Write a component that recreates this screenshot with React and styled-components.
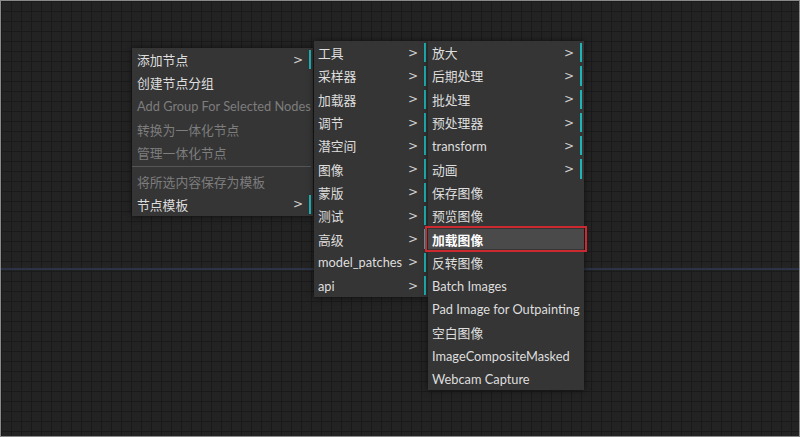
import React from 'react';
import styled, { createGlobalStyle } from 'styled-components';

const GlobalStyle = createGlobalStyle`
  html, body {
    margin: 0;
    padding: 0;
    background: #222;
  }
`;

const Canvas = styled.div`
  position: relative;
  width: 800px;
  height: 437px;
  box-sizing: border-box;
  overflow: hidden;
  border: 1px solid #8a8a8a;
  background-color: #232323;
  background-image:
    linear-gradient(to right, #1a1a1a 1px, transparent 1px),
    linear-gradient(to bottom, #1a1a1a 1px, transparent 1px);
  background-size: 10px 10px;
  font-family: Lato, "Noto Sans CJK SC", sans-serif;
  font-size: 12.8px;
`;

const Link = styled.div`
  position: absolute;
  left: 0;
  right: 0;
  top: 267px;
  height: 2px;
  background: #2c3346;
`;

const Menu = styled.div`
  position: absolute;
  left: ${p => p.$x}px;
  top: ${p => p.$y}px;
  width: ${p => p.$w}px;
  box-sizing: border-box;
  display: flex;
  flex-direction: column;
  gap: 4px;
  padding: 2px 2px 2px 0;
  background: #353535;
  box-shadow: 0 0 6px rgba(0, 0, 0, 0.6);
`;

const Item = styled.div`
  display: flex;
  align-items: center;
  justify-content: space-between;
  height: 19.3px;
  padding: 0 6px 0 ${p => p.$pad || 4}px;
  color: ${p => (p.$disabled ? '#7d7d7d' : '#dedede')};
  border-right: 2px solid ${p => (p.$sub ? '#1fb5b8' : 'transparent')};
  white-space: nowrap;
  background: ${p => (p.$active ? '#4a4a4a' : 'transparent')};
  font-weight: ${p => (p.$active ? 700 : 400)};
  outline: ${p => (p.$active ? '2px solid #cc2a30' : 'none')};
  outline-offset: ${p => (p.$active ? '1px' : '0')};
  ${p => p.$active && 'color: #fff; margin-right: -2px;'}
`;

const Arrow = styled.span`
  color: #cfcfcf;
  font-family: "DejaVu Sans", sans-serif;
  font-size: 12px;
`;

const Separator = styled.div`
  height: 1px;
  background: #555;
`;

const mainMenu = [
  { label: '添加节点', sub: true },
  { label: '创建节点分组' },
  { label: 'Add Group For Selected Nodes', disabled: true },
  { label: '转换为一体化节点', disabled: true },
  { label: '管理一体化节点', disabled: true },
  { sep: true },
  { label: '将所选内容保存为模板', disabled: true },
  { label: '节点模板', sub: true },
];

const categories = ['工具', '采样器', '加载器', '调节', '潜空间', '图像', '蒙版', '测试', '高级', 'model_patches', 'api'];

const imageMenu = [
  { label: '放大', sub: true },
  { label: '后期处理', sub: true },
  { label: '批处理', sub: true },
  { label: '预处理器', sub: true },
  { label: 'transform', sub: true },
  { label: '动画', sub: true },
  { label: '保存图像' },
  { label: '预览图像' },
  { label: '加载图像', active: true },
  { label: '反转图像' },
  { label: 'Batch Images' },
  { label: 'Pad Image for Outpainting' },
  { label: '空白图像' },
  { label: 'ImageCompositeMasked' },
  { label: 'Webcam Capture' },
];

function MenuItems({ items, pad }) {
  return items.map((it, i) =>
    it.sep ? (
      <Separator key={i} />
    ) : (
      <Item key={i} $sub={it.sub} $disabled={it.disabled} $active={it.active} $pad={pad}>
        <span>{it.label}</span>
        {it.sub && <Arrow>&gt;</Arrow>}
      </Item>
    )
  );
}

export default function App() {
  return (
    <>
      <GlobalStyle />
      <Canvas>
        <Link />
        <Menu $x={131} $y={47} $w={181}>
          <MenuItems items={mainMenu} pad={5} />
        </Menu>
        <Menu $x={313} $y={40} $w={114}>
          <MenuItems items={categories.map(label => ({ label, sub: true }))} />
        </Menu>
        <Menu $x={427} $y={40} $w={156}>
          <MenuItems items={imageMenu} />
        </Menu>
      </Canvas>
    </>
  );
}
